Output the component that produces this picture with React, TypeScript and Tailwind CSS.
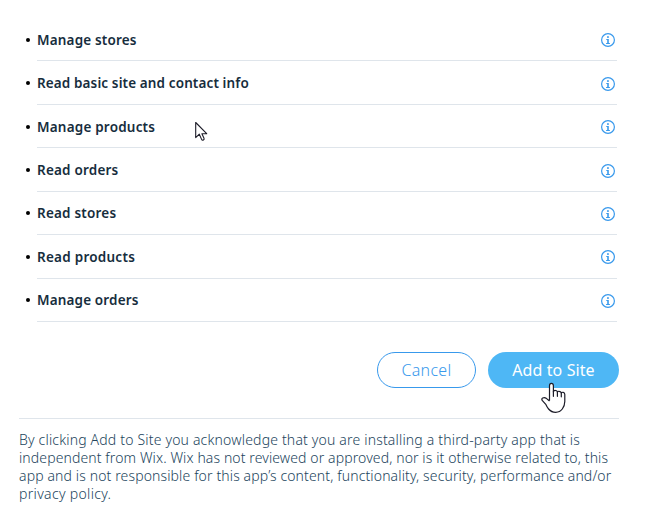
import React from 'react';

interface Permission {
  label: string;
  tracking: string;
}

const permissions: Permission[] = [
  { label: 'Manage stores', tracking: 'tracking-[0.17px]' },
  { label: 'Read basic site and contact info', tracking: 'tracking-[0.12px]' },
  { label: 'Manage products', tracking: 'tracking-[0.2px]' },
  { label: 'Read orders', tracking: 'tracking-[0.2px]' },
  { label: 'Read stores', tracking: 'tracking-[0.2px]' },
  { label: 'Read products', tracking: 'tracking-[0.25px]' },
  { label: 'Manage orders', tracking: 'tracking-[0.15px]' },
];

const disclaimer = [
  { text: 'By clicking Add to Site you acknowledge that you are installing a third-party app that is', tracking: 'tracking-[0.18px]' },
  { text: 'independent from Wix. Wix has not reviewed or approved, nor is it otherwise related to, this', tracking: 'tracking-[0.11px]' },
  { text: 'app and is not responsible for this app’s content, functionality, security, performance and/or', tracking: 'tracking-[0.13px]' },
  { text: 'privacy policy.', tracking: 'tracking-[0.33px]' },
];

const InfoIcon = () => (
  <svg className="mt-[1.2px]" width="14" height="14" viewBox="0 0 14 14" fill="none" stroke="#3899ec">
    <circle cx="7" cy="7" r="6.4" strokeWidth="1.2" />
    <path d="M5.3 6H7.8V10H8.9V10.9H5.1V10H6.2V6.9H5.3Z" fill="#3899ec" stroke="none" />
    <rect x="6.1" y="3.2" width="1.7" height="1.7" fill="#3899ec" stroke="none" />
  </svg>
);

const ArrowCursor = () => (
  <svg className="absolute left-[195px] top-[121px]" width="13" height="21" viewBox="0 0 13 21" fill="#fff" stroke="#1c1c28">
    <path d="M0.7 1.5V16.6L4.3 13.2L6.6 18.4Q7.2 19.5 8.4 18.9Q9.5 18.3 9 17.2L6.9 12.7H11.7Z" strokeWidth="1.1" strokeLinejoin="round" />
  </svg>
);

const HandCursor = () => (
  <svg className="absolute left-[541px] top-[382px]" width="25" height="32" viewBox="0 0 25 32" fill="#fff" stroke="#1c1c28">
    <path
      d="M8.5 18.5V3.7Q8.5 1.3 10.4 1.3Q12.4 1.3 12.4 3.7V9.8Q12.8 8.2 14.3 8.4Q16.2 8.6 16.4 10Q17 9 18.4 9.3Q20.1 9.6 20.3 11Q21 10 22.3 10.3Q23.8 10.7 23.8 12.6V19.5Q23.8 23.5 21.3 27Q18.9 30.3 14.7 30.3Q10.3 30.3 7.6 27Q6.1 25.2 5 22.7L1.2 18.4Q0.3 16.8 1.7 16Q3.3 15.2 5 16.1L8.5 19"
      strokeWidth="1.2"
      strokeLinejoin="round"
    />
    <path d="M12.4 9.5V14.3M16.4 10V14.3M20.3 11V14.8" strokeWidth="1.2" strokeLinecap="round" />
  </svg>
);

const PermissionRow = ({ label, tracking }: Permission) => (
  <li className="flex h-[43.46px] items-stretch">
    <span className="mt-[19.83px] mr-[7px] size-1 shrink-0 rounded-full bg-black"></span>
    <div className="flex flex-1 items-center justify-between border-b border-[#dfe5eb] pr-[2px] pt-[1.2px]">
      <span className={`whitespace-nowrap text-[13.5px] leading-[18px] font-semibold text-[#162d3d] ${tracking}`}>{label}</span>
      <InfoIcon />
    </div>
  </li>
);

export default function App() {
  return (
    <div className="relative h-[516px] w-[645px] overflow-hidden bg-white pt-[17.79px] font-['Noto_Sans',sans-serif]">
      <ul className="ml-[26px] w-[591px]">
        {permissions.map((item) => (
          <PermissionRow key={item.label} {...item} />
        ))}
      </ul>

      <div className="mt-[30px] mr-[26px] flex justify-end gap-3">
        <button className="h-9 w-[99px] rounded-full border border-[#3899ec] pt-px text-[16px] font-light tracking-[0.3px] text-[#3899ec]">
          Cancel
        </button>
        <button className="h-9 w-[131px] rounded-full bg-[#4eb7f5] pt-px text-[16px] tracking-[0.1px] text-white">
          Add to Site
        </button>
      </div>

      <div className="mt-[30px] ml-[19px] w-[600px] border-t border-[#dfe5eb] pt-3">
        <p className="text-[14px] leading-[18px] font-light text-[#22445c]">
          {disclaimer.map((line) => (
            <span key={line.text} className={`block whitespace-nowrap ${line.tracking}`}>{line.text}</span>
          ))}
        </p>
      </div>

      <ArrowCursor />
      <HandCursor />
    </div>
  );
}
